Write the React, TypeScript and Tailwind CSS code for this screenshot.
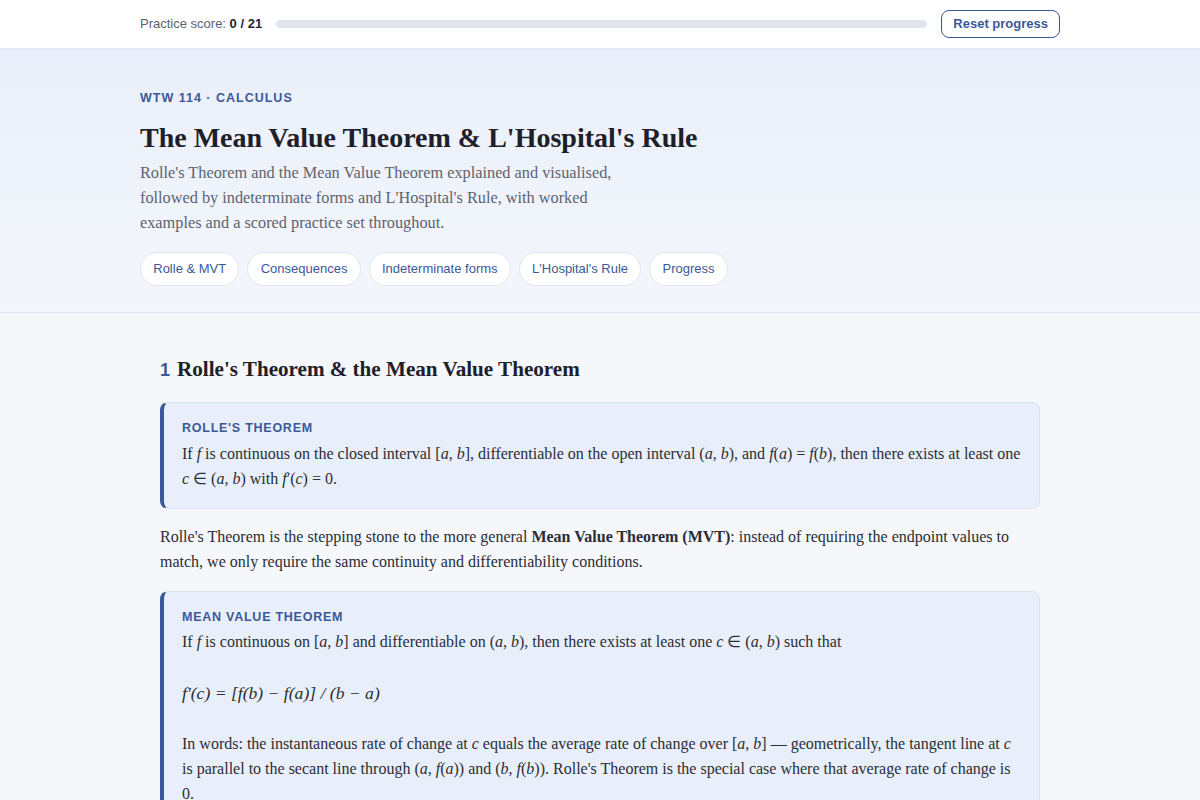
import React from "react";

const sans = "font-['Liberation_Sans',Arial,sans-serif]";
const serif = "font-['Liberation_Serif','Times_New_Roman',serif]";

const sections = [
  "Rolle & MVT",
  "Consequences",
  "Indeterminate forms",
  "L'Hospital's Rule",
  "Progress",
];

function Callout({ label, children }: { label: string; children: React.ReactNode }) {
  return (
    <div className="rounded-lg border border-[#dbe3f1] border-l-4 border-l-[#3b5998] bg-[#e9effa] px-[18px] pb-[17px] pt-[16px]">
      <div className={`${sans} text-[12.5px] font-bold uppercase tracking-[0.06em] text-[#3b5998]`}>
        {label}
      </div>
      <div className="mt-[3px] text-[16px] leading-[25px] text-[#2a2d34]">{children}</div>
    </div>
  );
}

export default function App() {
  return (
    <div className={`min-h-screen bg-[#f5f7fb] ${serif}`}>
      {/* score bar */}
      <header className="border-b border-[#e3e7ef] bg-white">
        <div className={`mx-auto flex max-w-[920px] items-center gap-[14px] py-[10px] ${sans}`}>
          <span className="text-[13px] text-[#5b6170]">
            Practice score: <b className="text-[#1f2430]">0 / 21</b>
          </span>
          <div className="h-[8px] flex-1 rounded-full bg-[#e1e5ed]" />
          <button className="rounded-lg border border-[#3b5998] bg-white px-[11px] py-[4px] text-[13px] font-bold leading-[18px] text-[#3b5998]">
            Reset progress
          </button>
        </div>
      </header>

      {/* hero */}
      <section className="border-b border-[#e1e5ee] bg-gradient-to-b from-[#e9effa] to-[#f4f6fb]">
        <div className="mx-auto max-w-[920px] pb-[26px] pt-[40px]">
          <div className={`${sans} text-[12.5px] font-bold uppercase tracking-[0.08em] text-[#3b5998]`}>
            WTW 114 · Calculus
          </div>
          <h1 className="mt-[12px] text-[28px] font-bold leading-[36px] text-[#1d2029]">
            The Mean Value Theorem &amp; L'Hospital's Rule
          </h1>
          <p className="mt-[4px] max-w-[510px] text-[16.3px] leading-[25px] text-[#5d6270]">
            Rolle's Theorem and the Mean Value Theorem explained and visualised, followed by
            indeterminate forms and L'Hospital's Rule, with worked examples and a scored practice
            set throughout.
          </p>
          <nav className={`mt-[17px] flex flex-wrap gap-[8px] ${sans}`}>
            {sections.map((s) => (
              <a
                key={s}
                className="rounded-full border border-[#e0e5ee] bg-white px-[12.25px] py-[7px] text-[13px] leading-[18px] text-[#3b5998]"
              >
                {s}
              </a>
            ))}
          </nav>
        </div>
      </section>

      {/* section 1 */}
      <main className="mx-auto max-w-[880px] pt-[41px]">
        <h2 className="flex items-baseline gap-[7px] text-[21.1px] font-bold leading-[30px] text-[#1d2029]">
          <span className={`${sans} text-[18px] text-[#3b5998]`}>1</span>
          Rolle's Theorem &amp; the Mean Value Theorem
        </h2>

        <div className="mt-[17px]">
          <Callout label="Rolle's Theorem">
            If <i>f</i> is continuous on the closed interval [<i>a</i>, <i>b</i>], differentiable on
            the open interval (<i>a</i>, <i>b</i>), and <i>f</i>(<i>a</i>) = <i>f</i>(<i>b</i>), then
            there exists at least one <i>c</i> ∈ (<i>a</i>, <i>b</i>) with <i>f</i>′(<i>c</i>) = 0.
          </Callout>
        </div>

        <p className="mb-[17px] mt-[15px] text-[16px] leading-[25px] text-[#2a2d34]">
          Rolle's Theorem is the stepping stone to the more general{" "}
          <b>Mean Value Theorem (MVT)</b>: instead of requiring the endpoint values to match, we
          only require the same continuity and differentiability conditions.
        </p>

        <Callout label="Mean Value Theorem">
          <p className="mt-[1px]">
            If <i>f</i> is continuous on [<i>a</i>, <i>b</i>] and differentiable on (<i>a</i>,{" "}
            <i>b</i>), then there exists at least one <i>c</i> ∈ (<i>a</i>, <i>b</i>) such that
          </p>
          <p className="mb-[25px] mt-[27px] text-[17.6px] italic">f′(c) = [f(b) − f(a)] / (b − a)</p>
          <p>
            In words: the instantaneous rate of change at <i>c</i> equals the average rate of change
            over [<i>a</i>, <i>b</i>] — geometrically, the tangent line at <i>c</i> is parallel to
            the secant line through (<i>a</i>, <i>f</i>(<i>a</i>)) and (<i>b</i>, <i>f</i>(<i>b</i>)).
            Rolle's Theorem is the special case where that average rate of change is 0.
          </p>
        </Callout>
      </main>
    </div>
  );
}
